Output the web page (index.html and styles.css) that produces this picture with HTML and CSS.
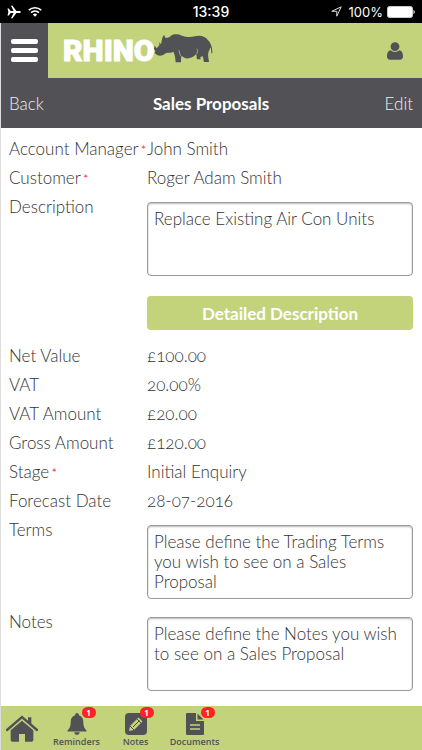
FILE: index.html
```html
<!DOCTYPE html>
<html lang="en">

<head>
    <meta charset="UTF-8">
    <meta name="viewport" content="width=device-width, initial-scale=1.0">
    <title>Sales Proposals - Rhino</title>
    <link rel="stylesheet" href="styles.css">
</head>

<body>
    <div class="status-bar">
        <div class="status-left">
            <svg width="14" height="14" viewBox="0 0 14 14">
                <path d="M0.5 3.5h1.3L3.6 6h3L4 0.8h1.5L9.4 6h3.1c1.6 0 1.6 2 0 2H9.4l-3.9 5.2H4L6.6 8h-3l-1.8 2.5H0.5L1.4 7z" fill="#fff"/>
            </svg>
            <svg width="14" height="11" viewBox="0 0 14 11">
                <path d="M0.8 4.2a9 9 0 0 1 12.4 0M3 6.6a6 6 0 0 1 8 0" fill="none" stroke="#fff" stroke-width="1.6"/>
                <path d="M4.8 8.4a3.4 3.4 0 0 1 4.4 0L7 10.7z" fill="#fff"/>
            </svg>
        </div>
        <div class="status-time">13:39</div>
        <div class="status-right">
            <svg width="11" height="11" viewBox="0 0 11 11">
                <path d="M0.8 5.3L10.2 0.8 5.8 10.2V5.3z" fill="none" stroke="#ddd" stroke-width="1"/>
            </svg>
            <span>100%</span>
            <svg width="28" height="12" viewBox="0 0 28 12">
                <rect x="0.5" y="0.5" width="25" height="11" rx="2" fill="#fff" stroke="#ccc"/>
                <path d="M26.5 4c1.6 0.6 1.6 3.4 0 4z" fill="#fff"/>
            </svg>
        </div>
    </div>

    <div class="app">
        <header class="header">
            <button class="menu-btn" aria-label="Menu">
                <span></span>
                <span></span>
                <span></span>
            </button>
            <a class="logo" href="#">
                <span class="logo-text">RHINO</span>
                <svg class="logo-rhino" width="62" height="30" viewBox="452 99 186 90">
                    <path d="M463 137L469 145L477 136L477 127L482 133L486 113L489 108L491 104L495 113C502 114 507 112 512 107C522 101 534 102 545 107C558 112 572 112 583 109C600 105 616 109 623 121C632 129 637 145 636 160L633 160C633 151 632 145 630 142C628 150 625 154 624 158C622 166 625 176 626 186L611 186C609 180 609 172 607 169L600 171L601 178L590 178C588 172 590 166 587 163C576 178 553 178 545 169C540 174 543 181 542 187L526 187C525 176 524 164 519 155C513 160 502 157 497 159C490 165 481 169 472 166L463 160L465 153L461 146z" fill="#525156"/>
                    <path d="M536 151c2 13 4 17 14 23M587 163c5-4 6-10 3-17" fill="none" stroke="#c2d37c" stroke-width="2"/>
                </svg>
            </a>
            <button class="user-btn" aria-label="Account">
                <svg width="16" height="18" viewBox="0 0 16 18">
                    <circle cx="8" cy="4.6" r="4.4"/>
                    <path d="M3.6 8.2c2.6 2.3 6.2 2.3 8.8 0C15 8.400 16 11.500 16 14.600c0 2-1.200 3.200-2.900 3.200H2.900C1.200 17.800 0 16.600 0 14.600 0 11.500 1 8.400 3.600 8.200z"/>
                </svg>
            </button>
        </header>

        <nav class="title-bar">
            <a href="#">Back</a>
            <h1>Sales Proposals</h1>
            <a href="#">Edit</a>
        </nav>

        <main class="form">
            <div class="row">
                <span class="label">Account Manager<i>*</i></span>
                <span>John Smith</span>
            </div>
            <div class="row">
                <span class="label">Customer<i>*</i></span>
                <span>Roger Adam Smith</span>
            </div>
            <div class="row">
                <label class="label" for="description">Description</label>
                <textarea id="description">Replace Existing Air Con Units</textarea>
            </div>
            <div class="row">
                <button class="detail-btn">Detailed Description</button>
            </div>
            <div class="row">
                <span class="label">Net Value</span>
                <span>£100.00</span>
            </div>
            <div class="row">
                <span class="label">VAT</span>
                <span>20.00%</span>
            </div>
            <div class="row">
                <span class="label">VAT Amount</span>
                <span>£20.00</span>
            </div>
            <div class="row">
                <span class="label">Gross Amount</span>
                <span>£120.00</span>
            </div>
            <div class="row">
                <span class="label">Stage<i>*</i></span>
                <span>Initial Enquiry</span>
            </div>
            <div class="row">
                <span class="label">Forecast Date</span>
                <span>28-07-2016</span>
            </div>
            <div class="row">
                <label class="label" for="terms">Terms</label>
                <textarea id="terms">Please define the Trading Terms you wish to see on a Sales Proposal</textarea>
            </div>
            <div class="row">
                <label class="label" for="notes">Notes</label>
                <textarea id="notes">Please define the Notes you wish to see on a Sales Proposal</textarea>
            </div>
        </main>

        <footer class="tabs">
            <a class="tab home" href="#" aria-label="Home">
                <svg width="32" height="27" viewBox="0 0 96 81">
                    <path d="M14 46L48 17 82 46V75q0 5-5 5H57V57H39V80H19q-5 0-5-5z"/>
                    <path d="M3 45L48 6 93 45" fill="none" stroke="#c2d37c" stroke-width="12"/>
                    <path d="M3 45L48 6 93 45" fill="none" stroke="#525156" stroke-width="7" stroke-linecap="round"/>
                    <path d="M66 7h10v22L66 20z"/>
                </svg>
            </a>
            <a class="tab" href="#">
                <span class="icon">
                    <svg width="20" height="22" viewBox="0 0 20 22">
                        <path d="M10 0c1.300 0 2 1 1.800 2.200C15 3 16.300 5.500 16.300 9c0 4.500 1.200 6.500 3.200 8.500V18.500H0.500V17.500C2.500 15.500 3.700 13.500 3.700 9c0-3.500 1.300-6 4.500-6.800C8 1 8.700 0 10 0zM7.300 19.300h5.400c0 3.400-5.400 3.400-5.400 0z"/>
                    </svg>
                    <span class="badge">1</span>
                </span>
                Reminders
            </a>
            <a class="tab" href="#">
                <span class="icon">
                    <svg width="22" height="22" viewBox="0 0 22 22">
                        <rect width="22" height="22" rx="4"/>
                        <path d="M4 18l1-5L13.500 4.500l4 4L9 17z" fill="#c2d37c"/>
                        <path d="M5 13l4 4M8 14L14.500 7.500M12 6l4 4" fill="none" stroke="#525156" stroke-width="1"/>
                    </svg>
                    <span class="badge">1</span>
                </span>
                Notes
            </a>
            <a class="tab" href="#">
                <span class="icon">
                    <svg width="18" height="22" viewBox="0 0 18 22">
                        <path d="M1 0h9v8h8v13q0 1-1 1H1q-1 0-1-1V1q0-1 1-1zM11.500 0.500L17.500 6.500h-6z"/>
                        <path d="M4 12h10M4 16h10" stroke="#c2d37c" stroke-width="1.500"/>
                    </svg>
                    <span class="badge">1</span>
                </span>
                Documents
            </a>
        </footer>
    </div>
</body>

</html>
```

FILE: styles.css
```css
* {
    box-sizing: border-box;
}

body {
    margin: 0;
    min-height: 100vh;
    display: flex;
    flex-direction: column;
    font-family: Lato, "Open Sans", sans-serif;
    font-size: 17px;
    font-weight: 300;
    font-variant-numeric: oldstyle-nums;
    color: #333;
    background-color: #fff;
}

button {
    font-family: inherit;
    border: none;
    padding: 0;
    cursor: pointer;
}

a {
    color: inherit;
    text-decoration: none;
}

svg {
    display: block;
}

.status-bar {
    display: grid;
    grid-template-columns: 1fr auto 1fr;
    align-items: center;
    height: 23px;
    padding: 0 7px;
    background: #000;
    color: #fff;
    font-family: Inter, sans-serif;
    font-size: 13px;
    font-weight: 400;
    font-variant-numeric: normal;
}

.status-left,
.status-right {
    display: flex;
    align-items: center;
    gap: 7px;
}

.status-right {
    justify-content: flex-end;
    gap: 4px;
}

.status-right span {
    padding-left: 3px;
}

.status-time {
    font-size: 14px;
    font-weight: 500;
}

.app {
    flex: 1;
    display: flex;
    flex-direction: column;
    border-left: 1px solid #ddd;
}

.header {
    display: flex;
    align-items: center;
    height: 55px;
    background: #c2d37c;
}

.menu-btn {
    display: flex;
    flex-direction: column;
    justify-content: center;
    align-items: center;
    gap: 4px;
    width: 47px;
    height: 55px;
    background: #525156;
}

.menu-btn span {
    width: 27px;
    height: 5px;
    border-radius: 2px;
    background: #fff;
}

.logo {
    display: flex;
    align-items: center;
    flex: 1;
    padding-left: 15px;
}

.logo-text {
    font-family: Roboto, sans-serif;
    font-size: 30px;
    font-weight: 900;
    line-height: 36px;
    color: #fff;
    -webkit-text-stroke: 1px #fff;
}

.logo-rhino {
    margin: 0 0 6px -4px;
}

.user-btn {
    margin-right: 19px;
    background: none;
    fill: #525156;
}

.title-bar {
    display: grid;
    grid-template-columns: 1fr auto 1fr;
    align-items: center;
    height: 50px;
    padding: 0 9px 0 8px;
    background: #525156;
    color: #eee;
}

.title-bar h1 {
    margin: 0;
    font-size: 17px;
    font-weight: 700;
    color: #fff;
}

.title-bar a:last-child {
    text-align: right;
}

.form {
    flex: 1;
    padding: 7px 9px 6px 8px;
}

.row {
    display: grid;
    grid-template-columns: 138px 1fr;
    line-height: 28px;
    min-height: 29px;
}

.label {
    white-space: nowrap;
}

.label i {
    margin-left: 2px;
    font-size: 14px;
    font-style: normal;
    line-height: 14px;
    color: #f00;
}

textarea {
    display: block;
    width: 100%;
    height: 74px;
    margin: 9px 0;
    padding: 6px;
    border: 1px solid #999;
    border-radius: 4px;
    box-shadow: inset 0 1px 2px #bbb;
    font: inherit;
    line-height: 20px;
    color: inherit;
    resize: none;
    overflow: hidden;
}

.detail-btn {
    grid-column: 2;
    height: 34px;
    margin: 11px 0 12px;
    border-radius: 4px;
    background: #c2d37c;
    color: #fff;
    font-size: 17px;
    font-weight: 700;
}

.tabs {
    display: flex;
    align-items: flex-end;
    height: 44px;
    background: #c2d37c;
    fill: #525156;
}

.tab {
    display: flex;
    flex-direction: column;
    align-items: center;
    width: 59px;
    padding-bottom: 2px;
    font-family: "Open Sans", sans-serif;
    font-size: 9px;
    font-weight: 600;
    line-height: 13px;
    color: #525156;
}

.home {
    width: 46px;
    padding: 0 4px 8px 0;
}

.icon {
    position: relative;
}

.badge {
    position: absolute;
    top: -6px;
    left: 15px;
    width: 14px;
    border-radius: 6px;
    background: #f22;
    color: #fff;
    font-size: 8px;
    font-weight: 700;
    line-height: 11px;
    text-align: center;
    font-variant-numeric: normal;
}
```
